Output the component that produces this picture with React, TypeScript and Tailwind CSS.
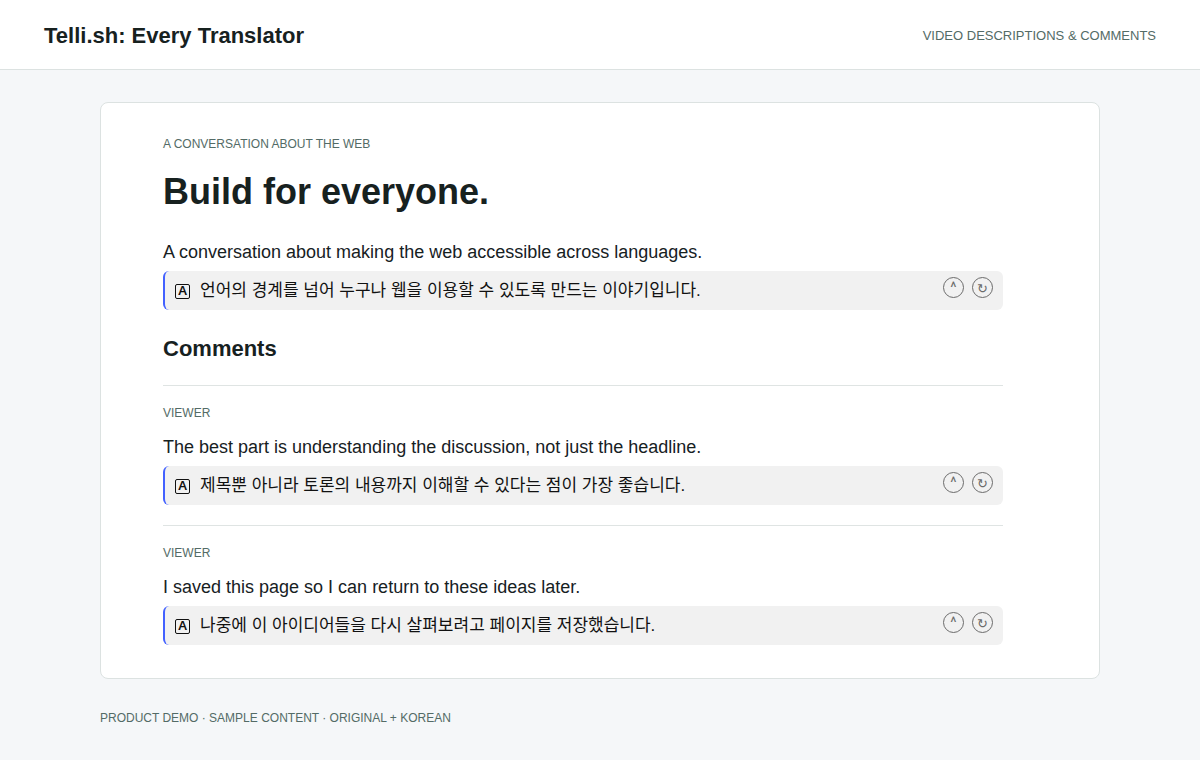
type TranslationProps = {
    text: string;
};

const comments = [
    {
        id: 1,
        author: 'VIEWER',
        text: 'The best part is understanding the discussion, not just the headline.',
        translation: '제목뿐 아니라 토론의 내용까지 이해할 수 있다는 점이 가장 좋습니다.'
    },
    {
        id: 2,
        author: 'VIEWER',
        text: 'I saved this page so I can return to these ideas later.',
        translation: '나중에 이 아이디어들을 다시 살펴보려고 페이지를 저장했습니다.'
    }
];

const Translation = ({ text }: TranslationProps) => (
    <div className="flex items-start justify-between rounded-md border-l-2 border-[#4361ff] bg-[#f1f1f1] pt-1.5 pr-2.5 pb-1.5 pl-2.5 text-[#111111]">
        <div className="flex items-center gap-2.5">
            <span className="mt-0.5 flex h-[15px] w-[15px] items-center justify-center rounded-xs border border-[#111111] pb-0.5 font-['Noto_Sans',sans-serif] text-[13px] leading-none font-semibold">A</span>
            <p lang="ko" className="text-[17px] leading-[27px]">{text}</p>
        </div>
        <div className="flex gap-2 text-[#6b6b6b]">
            <button aria-label="Collapse translation" className="flex h-[21px] w-[21px] items-center justify-center rounded-full border border-[#6b6b6b] font-['Roboto',sans-serif] text-[15px] leading-none">^</button>
            <button aria-label="Translate again" className="flex h-[21px] w-[21px] items-center justify-center rounded-full border border-[#6b6b6b] pt-0.5 text-[13px] leading-none">↻</button>
        </div>
    </div>
);

const App = () => {
    return (
        <div className="min-h-screen bg-[#f5f7f9] font-['Liberation_Sans','Noto_Sans_CJK_KR',sans-serif] text-[#17211f]">
            <header className="flex items-center justify-between border-b border-[#dce2e1] bg-white px-11 pt-[22px] pb-5">
                <div className="text-[22px] leading-[27px] font-bold">Telli.sh: Every Translator</div>
                <div className="text-[13px] text-[#536b66]">VIDEO DESCRIPTIONS &amp; COMMENTS</div>
            </header>

            <main className="mx-auto mt-8 max-w-[1000px] rounded-lg border border-[#dce2e1] bg-white px-[62px] pt-8 pb-[33px]">
                <div className="max-w-[840px]">
                    <div className="text-xs leading-[18px] text-[#536b66]">A CONVERSATION ABOUT THE WEB</div>
                    <h1 className="mt-[17px] text-4xl leading-[44px] font-bold">Build for everyone.</h1>
                    <p className="mt-6 mb-[5px] text-lg leading-[28px]">A conversation about making the web accessible across languages.</p>
                    <Translation text="언어의 경계를 넘어 누구나 웹을 이용할 수 있도록 만드는 이야기입니다." />

                    <h2 className="mt-[25px] mb-[22px] text-[22px] leading-[28px] font-bold">Comments</h2>
                    {comments.map(comment => (
                        <article key={comment.id} className="border-t border-[#dfe4e3] pt-[18px] pb-5 last:pb-0">
                            <div className="text-xs leading-[18px] text-[#536b66]">{comment.author}</div>
                            <p className="mt-[11px] mb-[5px] text-lg leading-[28px]">{comment.text}</p>
                            <Translation text={comment.translation} />
                        </article>
                    ))}
                </div>
            </main>

            <footer className="mx-auto mt-[30px] max-w-[1000px] text-xs leading-[18px] text-[#536b66]">
                PRODUCT DEMO · SAMPLE CONTENT · ORIGINAL + KOREAN
            </footer>
        </div>
    );
};

export default App;
